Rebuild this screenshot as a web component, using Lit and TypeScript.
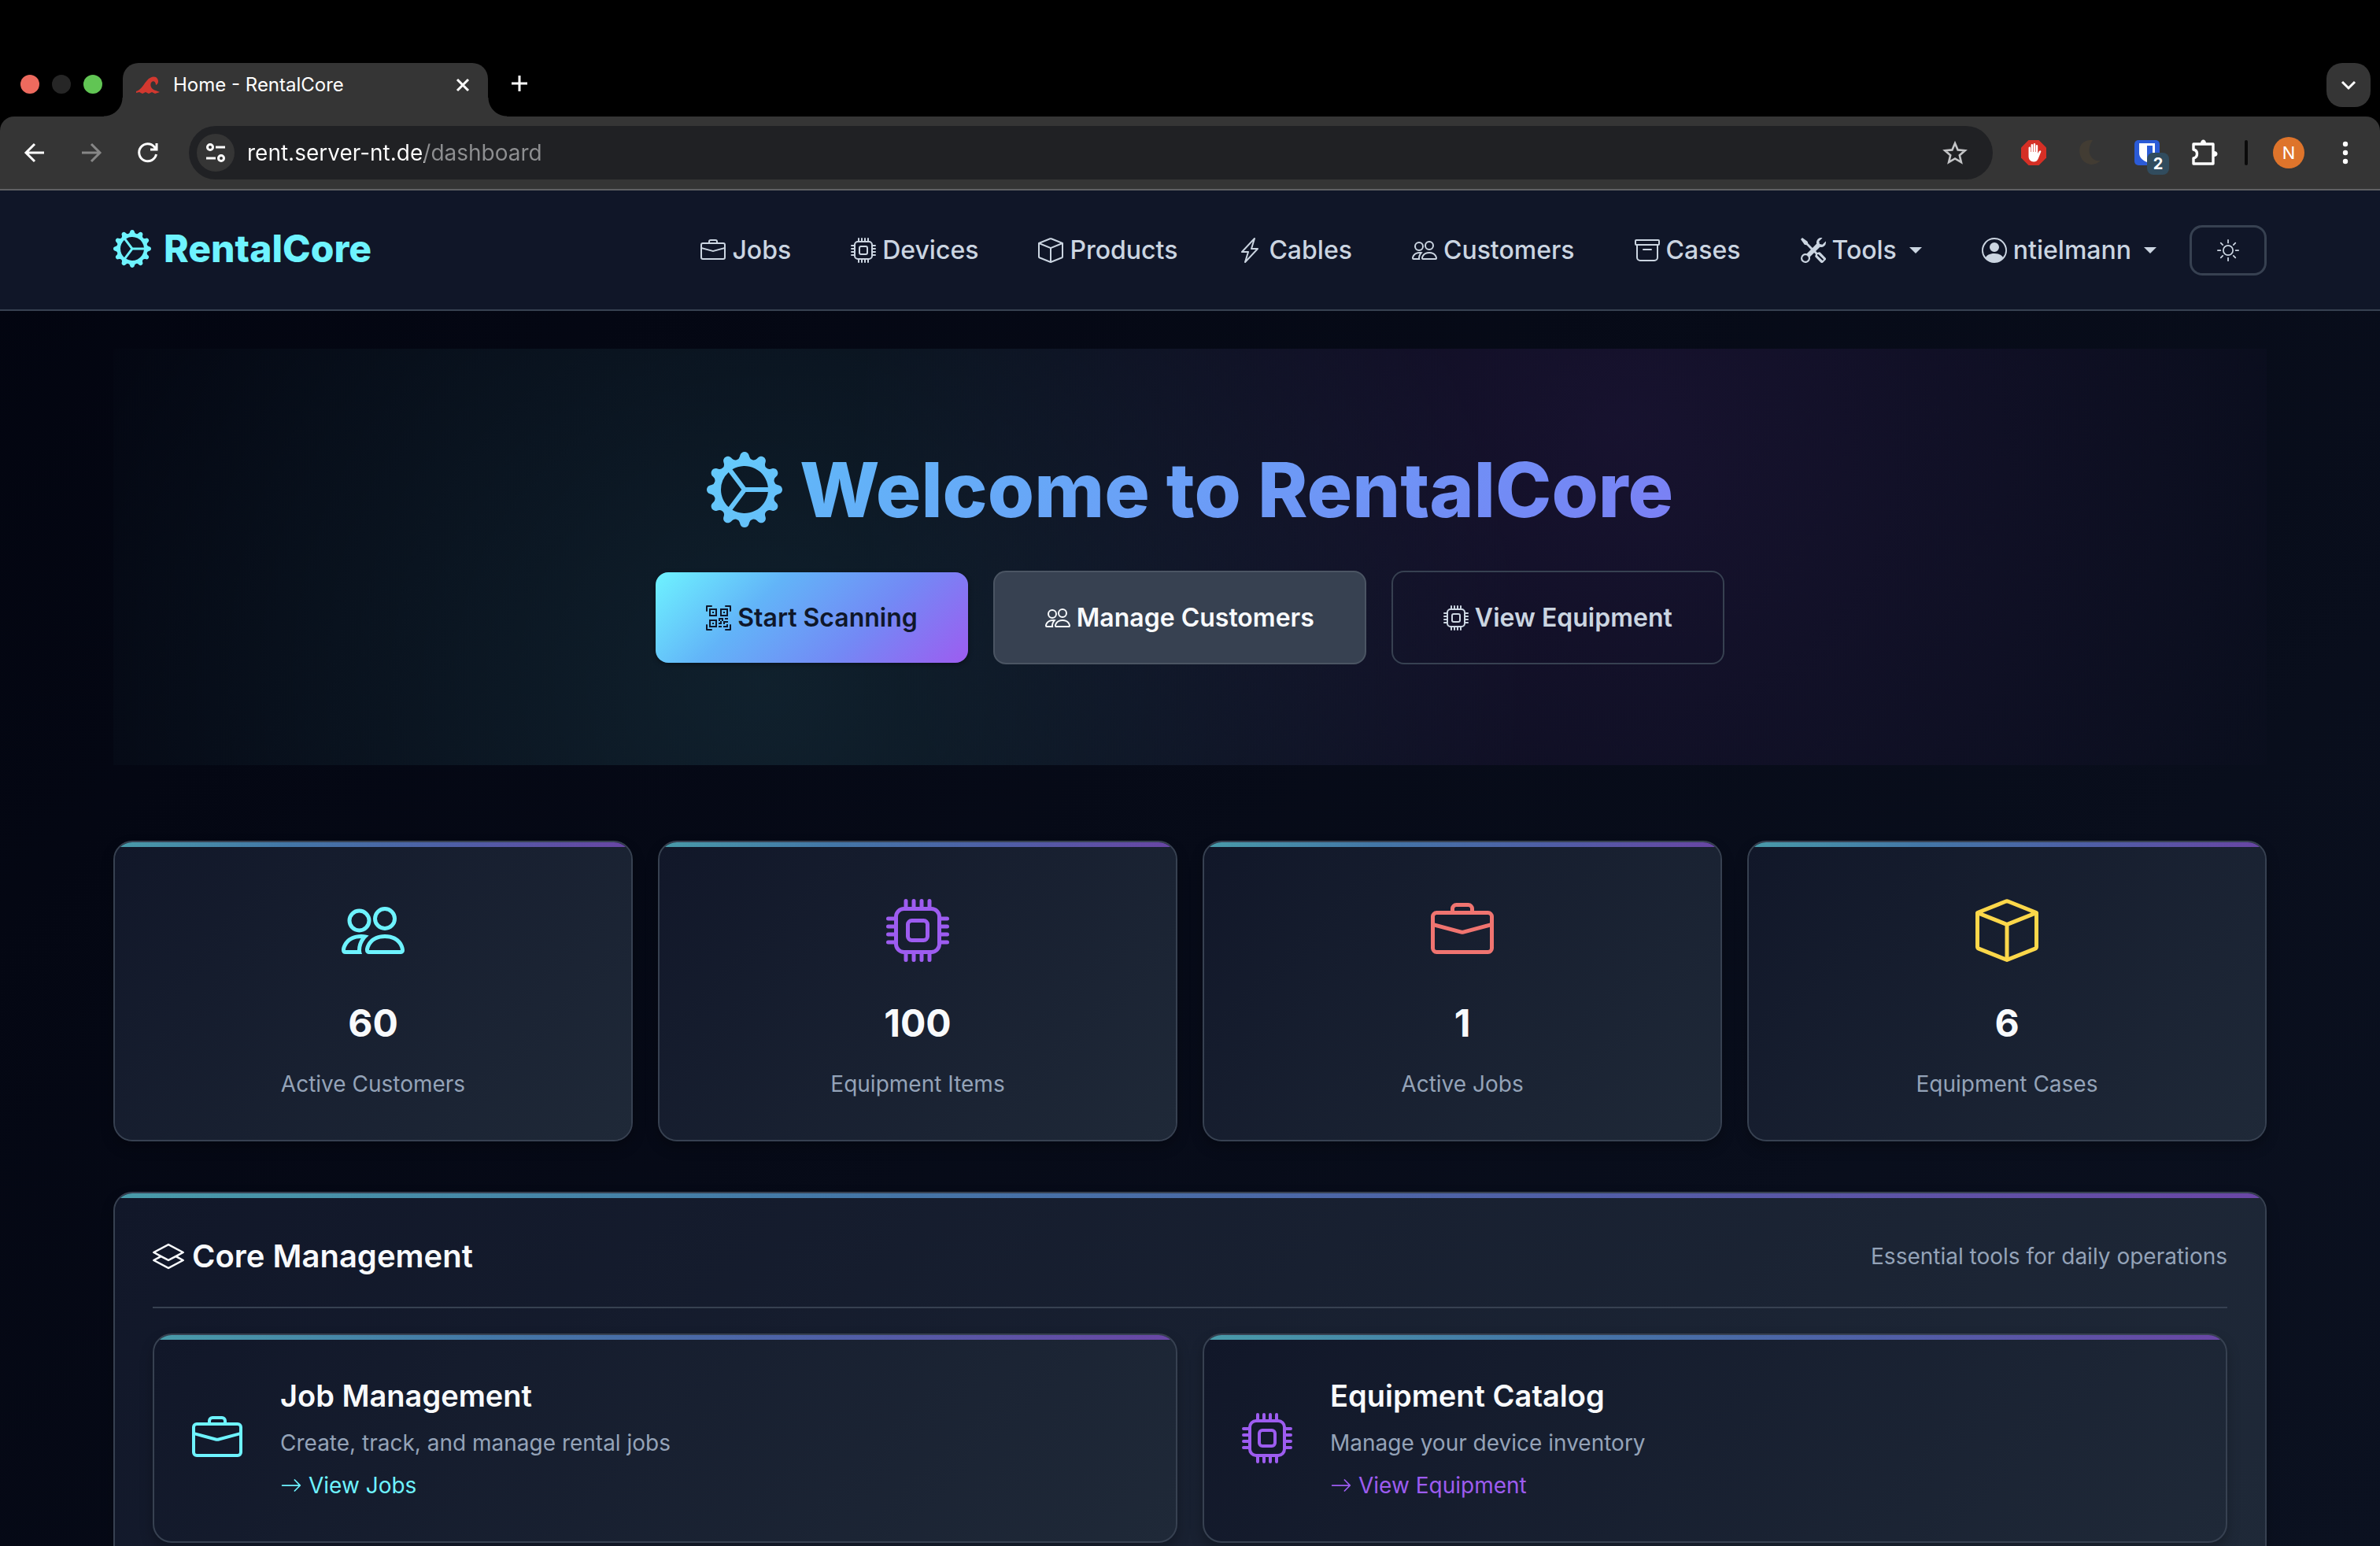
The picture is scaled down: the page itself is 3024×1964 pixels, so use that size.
import { LitElement, html, css, svg, nothing } from "lit";
import { customElement, property } from "lit/decorators.js";

const ICONS: Record<string, string> = {
  gear: "M7.068.727c.243-.97 1.62-.97 1.864 0l.071.286a.96.96 0 0 0 1.622.434l.205-.211c.695-.719 1.888-.03 1.613.931l-.08.284a.96.96 0 0 0 1.187 1.187l.283-.081c.96-.275 1.65.918.931 1.613l-.211.205a.96.96 0 0 0 .434 1.622l.286.071c.97.243.97 1.62 0 1.864l-.286.071a.96.96 0 0 0-.434 1.622l.211.205c.719.695.03 1.888-.931 1.613l-.284-.08a.96.96 0 0 0-1.187 1.187l.081.283c.275.96-.918 1.65-1.613.931l-.205-.211a.96.96 0 0 0-1.622.434l-.071.286c-.243.97-1.62.97-1.864 0l-.071-.286a.96.96 0 0 0-1.622-.434l-.205.211c-.695.719-1.888.03-1.613-.931l.08-.284a.96.96 0 0 0-1.186-1.187l-.284.081c-.96.275-1.65-.918-.931-1.613l.211-.205a.96.96 0 0 0-.434-1.622l-.286-.071c-.97-.243-.97-1.62 0-1.864l.286-.071a.96.96 0 0 0 .434-1.622l-.211-.205c-.719-.695-.03-1.888.931-1.613l.284.08a.96.96 0 0 0 1.187-1.186l-.081-.284c-.275-.96.918-1.65 1.613-.931l.205.211a.96.96 0 0 0 1.622-.434zM12.973 8.5H8.25l-2.834 3.779A4.998 4.998 0 0 0 12.973 8.5m0-1a4.998 4.998 0 0 0-7.557-3.779l2.834 3.78zM5.048 3.967l-.087.065zm-.431.355A4.98 4.98 0 0 0 3.002 8c0 1.455.622 2.765 1.615 3.678L7.375 8zm.344 7.646.087.065z",
  briefcase: "M6.5 1A1.5 1.5 0 0 0 5 2.5V3H1.5A1.5 1.5 0 0 0 0 4.5v8A1.5 1.5 0 0 0 1.5 14h13a1.5 1.5 0 0 0 1.5-1.5v-8A1.5 1.5 0 0 0 14.5 3H11v-.5A1.5 1.5 0 0 0 9.5 1zm0 1h3a.5.5 0 0 1 .5.5V3H6v-.5a.5.5 0 0 1 .5-.5m1.886 6.914L15 7.151V12.5a.5.5 0 0 1-.5.5h-13a.5.5 0 0 1-.5-.5V7.15l6.614 1.764a1.5 1.5 0 0 0 .772 0M1.5 4h13a.5.5 0 0 1 .5.5v1.616L8.129 7.948a.5.5 0 0 1-.258 0L1 6.116V4.5a.5.5 0 0 1 .5-.5",
  cpu: "M5 0a.5.5 0 0 1 .5.5V2h1V.5a.5.5 0 0 1 1 0V2h1V.5a.5.5 0 0 1 1 0V2h1V.5a.5.5 0 0 1 1 0V2A2.5 2.5 0 0 1 14 4.5h1.5a.5.5 0 0 1 0 1H14v1h1.5a.5.5 0 0 1 0 1H14v1h1.5a.5.5 0 0 1 0 1H14v1h1.5a.5.5 0 0 1 0 1H14a2.5 2.5 0 0 1-2.5 2.5v1.5a.5.5 0 0 1-1 0V14h-1v1.5a.5.5 0 0 1-1 0V14h-1v1.5a.5.5 0 0 1-1 0V14h-1v1.5a.5.5 0 0 1-1 0V14A2.5 2.5 0 0 1 2 11.5H.5a.5.5 0 0 1 0-1H2v-1H.5a.5.5 0 0 1 0-1H2v-1H.5a.5.5 0 0 1 0-1H2v-1H.5a.5.5 0 0 1 0-1H2A2.5 2.5 0 0 1 4.5 2V.5A.5.5 0 0 1 5 0m-.5 3A1.5 1.5 0 0 0 3 4.5v7A1.5 1.5 0 0 0 4.5 13h7a1.5 1.5 0 0 0 1.5-1.5v-7A1.5 1.5 0 0 0 11.5 3zM5 6.5A1.5 1.5 0 0 1 6.5 5h3A1.5 1.5 0 0 1 11 6.5v3A1.5 1.5 0 0 1 9.5 11h-3A1.5 1.5 0 0 1 5 9.5zM6.5 6a.5.5 0 0 0-.5.5v3a.5.5 0 0 0 .5.5h3a.5.5 0 0 0 .5-.5v-3a.5.5 0 0 0-.5-.5z",
  box: "M8.186 1.113a.5.5 0 0 0-.372 0L1.846 3.5 8 5.961 14.154 3.5zM15 4.239l-6.5 2.6v7.922l6.5-2.6V4.24zM7.5 14.762V6.838L1 4.239v7.923zM7.443.184a1.5 1.5 0 0 1 1.114 0l7.129 2.852A.5.5 0 0 1 16 3.5v8.662a1 1 0 0 1-.629.928l-7.185 2.874a.5.5 0 0 1-.372 0L.63 13.09a1 1 0 0 1-.63-.928V3.5a.5.5 0 0 1 .314-.464z",
  lightning: "M11.251.068a.5.5 0 0 1 .227.58L9.677 6.5H13a.5.5 0 0 1 .364.843l-8 8.5a.5.5 0 0 1-.842-.49L6.323 9.5H3a.5.5 0 0 1-.364-.843l8-8.5a.5.5 0 0 1 .615-.09zM4.157 8.5H7a.5.5 0 0 1 .478.647L6.11 13.59l5.732-6.09H9a.5.5 0 0 1-.478-.647L9.89 2.41z",
  people: "M15 14s1 0 1-1-1-4-5-4-5 3-5 4 1 1 1 1zm-7.978-1L7 12.996c.001-.264.167-1.03.76-1.72C8.312 10.629 9.282 10 11 10c1.717 0 2.687.63 3.24 1.276.593.69.758 1.457.76 1.72l-.008.002-.014.002zM11 7a2 2 0 1 0 0-4 2 2 0 0 0 0 4m3-2a3 3 0 1 1-6 0 3 3 0 0 1 6 0M6.936 9.28a6 6 0 0 0-1.23-.247A7 7 0 0 0 5 9c-4 0-5 3-5 4q0 1 1 1h4.216A2.24 2.24 0 0 1 5 13c0-1.01.377-2.042 1.09-2.904.243-.294.526-.569.846-.816M4.92 10A5.5 5.5 0 0 0 4 13H1c0-.26.164-1.03.76-1.724.545-.636 1.492-1.256 3.16-1.275zM1.5 5.5a3 3 0 1 1 6 0 3 3 0 0 1-6 0m3-2a2 2 0 1 0 0 4 2 2 0 0 0 0-4",
  archive: "M0 2a1 1 0 0 1 1-1h14a1 1 0 0 1 1 1v2a1 1 0 0 1-1 1v7.5a2.5 2.5 0 0 1-2.5 2.5h-9A2.5 2.5 0 0 1 1 12.5V5a1 1 0 0 1-1-1zm2 3v7.5A1.5 1.5 0 0 0 3.5 14h9a1.5 1.5 0 0 0 1.5-1.5V5zm13-3H1v2h14zM5 7.5a.5.5 0 0 1 .5-.5h5a.5.5 0 0 1 0 1h-5a.5.5 0 0 1-.5-.5",
  tools: "M1 0 0 1l2.2 3.081a1 1 0 0 0 .815.419h.07a1 1 0 0 1 .708.293l2.675 2.675-2.617 2.654A3.003 3.003 0 0 0 0 13a3 3 0 1 0 5.878-.851l2.654-2.617.968.968-.305.914a1 1 0 0 0 .242 1.023l3.27 3.27a.997.997 0 0 0 1.414 0l1.586-1.586a.997.997 0 0 0 0-1.414l-3.27-3.27a1 1 0 0 0-1.023-.242L10.5 9.5l-.96-.96 2.68-2.643A3.005 3.005 0 0 0 16 3q0-.405-.102-.777l-2.14 2.141L12 4l-.364-1.757L13.777.102a3 3 0 0 0-3.675 3.68L7.462 6.46 4.793 3.793a1 1 0 0 1-.293-.707v-.071a1 1 0 0 0-.419-.814zm9.646 10.646a.5.5 0 0 1 .708 0l2.914 2.915a.5.5 0 0 1-.707.707l-2.915-2.914a.5.5 0 0 1 0-.708M3 11l.471.242.529.026.287.445.445.287.026.529L5 13l-.242.471-.026.529-.445.287-.287.445-.529.026L3 15l-.471-.242L2 14.732l-.287-.445L1.268 14l-.026-.529L1 13l.242-.471.026-.529.445-.287.287-.445.529-.026z",
  person: "M11 6a3 3 0 1 1-6 0 3 3 0 0 1 6 0M0 8a8 8 0 1 1 16 0A8 8 0 0 1 0 8m8-7a7 7 0 0 0-5.468 11.37C3.242 11.226 4.805 10 8 10s4.757 1.225 5.468 2.37A7 7 0 0 0 8 1",
  sun: "M8 11a3 3 0 1 1 0-6 3 3 0 0 1 0 6m0 1a4 4 0 1 0 0-8 4 4 0 0 0 0 8M8 0a.5.5 0 0 1 .5.5v2a.5.5 0 0 1-1 0v-2A.5.5 0 0 1 8 0m0 13a.5.5 0 0 1 .5.5v2a.5.5 0 0 1-1 0v-2A.5.5 0 0 1 8 13m8-5a.5.5 0 0 1-.5.5h-2a.5.5 0 0 1 0-1h2a.5.5 0 0 1 .5.5M3 8a.5.5 0 0 1-.5.5h-2a.5.5 0 0 1 0-1h2A.5.5 0 0 1 3 8m10.657-5.657a.5.5 0 0 1 0 .707l-1.414 1.415a.5.5 0 1 1-.707-.708l1.414-1.414a.5.5 0 0 1 .707 0m-9.193 9.193a.5.5 0 0 1 0 .707L3.05 13.657a.5.5 0 0 1-.707-.707l1.414-1.414a.5.5 0 0 1 .707 0m9.193 2.121a.5.5 0 0 1-.707 0l-1.414-1.414a.5.5 0 0 1 .707-.707l1.414 1.414a.5.5 0 0 1 0 .707M4.464 4.465a.5.5 0 0 1-.707 0L2.343 3.05a.5.5 0 1 1 .707-.707l1.414 1.414a.5.5 0 0 1 0 .708",
  layers: "M8.235 1.559a.5.5 0 0 0-.47 0l-7.5 4a.5.5 0 0 0 0 .882L3.188 8 .264 9.559a.5.5 0 0 0 0 .882l7.5 4a.5.5 0 0 0 .47 0l7.5-4a.5.5 0 0 0 0-.882L12.813 8l2.922-1.559a.5.5 0 0 0 0-.882zm3.515 7.008L14.438 10 8 13.433 1.562 10 4.25 8.567l3.515 1.874a.5.5 0 0 0 .47 0zM8 9.433 1.562 6 8 2.567 14.438 6z",
  arrow: "M1 8a.5.5 0 0 1 .5-.5h11.793l-3.147-3.146a.5.5 0 0 1 .708-.708l4 4a.5.5 0 0 1 0 .708l-4 4a.5.5 0 0 1-.708-.708L13.293 8.5H1.5A.5.5 0 0 1 1 8",
  scan: "M0 .5A.5.5 0 0 1 .5 0h3a.5.5 0 0 1 0 1H1v2.5a.5.5 0 0 1-1 0zm12 0a.5.5 0 0 1 .5-.5h3a.5.5 0 0 1 .5.5v3a.5.5 0 0 1-1 0V1h-2.5a.5.5 0 0 1-.5-.5M.5 12a.5.5 0 0 1 .5.5V15h2.5a.5.5 0 0 1 0 1h-3a.5.5 0 0 1-.5-.5v-3a.5.5 0 0 1 .5-.5m15 0a.5.5 0 0 1 .5.5v3a.5.5 0 0 1-.5.5h-3a.5.5 0 0 1 0-1H15v-2.5a.5.5 0 0 1 .5-.5M4 4h1v1H4zM7 2H2v5h5zM3 3h3v3H3zm2 8H4v1h1zM7 9H2v5h5zm-4 1h3v3H3zm8-6h1v1h-1zM9 2h5v5H9zm1 1v3h3V3zM8 8v2h1v1H8v1h2v-2h1v2h1v-1h2v-1h-3V8zm2 2H9V9h1zm4 2h-1v1h-2v1h3zm-4 2v-1H8v1zM12 9h2V8h-2z",
};

/** Square glyph on a 16-unit grid, as large as its font size. */
@customElement("rc-icon")
class RcIcon extends LitElement {
  @property() name = "";
  @property({ type: Boolean }) shaded = false;

  static styles = css`
    :host { display: inline-flex; width: 1em; height: 1em; flex: none; }
    svg { width: 100%; height: 100%; display: block; }
  `;

  render() {
    return html`<svg viewBox="0 0 16 16" fill=${this.shaded ? "url(#shade)" : "currentColor"} fill-rule="evenodd" aria-hidden="true">
      ${this.shaded
        ? svg`<defs><linearGradient id="shade" x1="0" y1="0" x2="1" y2="1">
            <stop offset="0" stop-color="#66ccfa"/><stop offset="1" stop-color="#64bdf9"/>
          </linearGradient></defs>`
        : nothing}
      <path d=${ICONS[this.name] ?? ""} />
    </svg>`;
  }
}

@customElement("browser-chrome")
class BrowserChrome extends LitElement {
  static styles = css`
    :host { display: block; background: #000; font-family: Inter, "Liberation Sans", sans-serif; color: #fff; }
    button { border: 0; background: none; padding: 0; margin: 0; color: inherit; font: inherit; display: grid; place-items: center; flex: none; }
    svg { display: block; }
    .tabs { display: flex; padding: 80px 12px 0 26px; height: 68px; align-items: flex-start; }
    .lights { display: flex; gap: 16px; padding-top: 15px; width: 130px; flex: none; }
    .light { width: 24px; height: 24px; border-radius: 50%; }
    .red { background: #ed6a5e; }
    .grey { background: #262626; }
    .green { background: #61c554; }
    .tab { position: relative; box-sizing: border-box; width: 464px; height: 68px; background: #353535; border-radius: 20px 20px 0 0; display: flex; align-items: center; padding: 0 20px 12px 16px; gap: 16px; font-size: 24px; line-height: 32px; }
    .tab::before, .tab::after { content: ""; position: absolute; bottom: 0; width: 24px; height: 24px; }
    .tab::before { left: -24px; background: radial-gradient(circle at 0 0, transparent 23px, #353535 24px); }
    .tab::after { right: -24px; background: radial-gradient(circle at 100% 0, transparent 23px, #353535 24px); }
    .tab-title { flex: 1; }
    .new-tab { width: 40px; height: 40px; margin: 6px 0 0 20px; }
    .tab-list { width: 56px; height: 56px; border-radius: 20px; background: #353535; margin-left: auto; }
    .toolbar { display: flex; align-items: center; height: 92px; background: #353535; border-bottom: 2px solid #5f6062; border-radius: 18px 18px 0 0; padding: 0 28px 0 20px; }
    .nav { display: flex; gap: 24px; margin-right: 28px; }
    .nav button { width: 48px; height: 48px; }
    .dim { color: #878787; }
    .address { flex: 1; display: flex; align-items: center; gap: 16px; box-sizing: border-box; height: 68px; border-radius: 34px; background: #202124; padding: 0 32px 0 10px; }
    .site { width: 48px; height: 48px; border-radius: 50%; background: #353535; }
    .url { flex: 1; min-width: 0; border: 0; padding: 0; outline: 0; font: 28px/40px Inter, "Liberation Sans", sans-serif; color: transparent; background: linear-gradient(90deg, #fff 0 225px, #8e8f91 225px); -webkit-background-clip: text; background-clip: text; }
    .tools { display: flex; align-items: center; gap: 40px; margin-left: 36px; }
    .vault { position: relative; }
    .badge { position: absolute; left: 16px; top: 16px; width: 28px; height: 28px; border-radius: 8px; background: #314c5e; font-size: 20px; line-height: 28px; font-weight: 700; text-align: center; }
    .rule { width: 4px; height: 32px; border-radius: 2px; background: #0a0a0a; margin: 0 -8px 0 -6px; }
    .avatar { width: 40px; height: 40px; border-radius: 50%; background: #de742b; font-size: 22px; line-height: 40px; }
    .menu { width: 32px; height: 40px; margin-left: -4px; }
  `;

  render() {
    return html`
      <div class="tabs">
        <div class="lights"><span class="light red"></span><span class="light grey"></span><span class="light green"></span></div>
        <div class="tab">
          <svg width="32" height="24" viewBox="0 0 32 24" fill="#d2382f" aria-hidden="true">
            <path d="M1 20C8 18 11 10 15 6c4-5 11-6 13-2 2 3 1 7-2 8 0-5-4-6-6-3-2 4 1 9 6 10l5 2-3 1-3 1-4-2-4 2-4-2-4 2-4-2-4 1z" />
          </svg>
          <span class="tab-title">Home - RentalCore</span>
          <button aria-label="Close tab"><svg width="24" height="24" viewBox="0 0 24 24" stroke="currentColor" stroke-width="3"><path d="M5 5l14 14M19 5 5 19" /></svg></button>
        </div>
        <button class="new-tab" aria-label="New tab"><svg width="24" height="24" viewBox="0 0 24 24" stroke="currentColor" stroke-width="3"><path d="M12 2v20M2 12h20" /></svg></button>
        <button class="tab-list" aria-label="Search tabs"><svg width="24" height="24" viewBox="0 0 24 24" fill="none" stroke="currentColor" stroke-width="3"><path d="m4 8 8 8 8-8" /></svg></button>
      </div>
      <div class="toolbar">
        <div class="nav">
          <button aria-label="Back"><svg width="28" height="28" viewBox="0 0 28 28" fill="none" stroke="currentColor" stroke-width="3"><path d="M26 14H4M14 3 3 14l11 11" /></svg></button>
          <button class="dim" aria-label="Forward"><svg width="28" height="28" viewBox="0 0 28 28" fill="none" stroke="currentColor" stroke-width="3"><path d="M2 14h22M14 3l11 11-11 11" /></svg></button>
          <button aria-label="Reload"><svg width="28" height="28" viewBox="0 0 28 28" fill="none" stroke="currentColor" stroke-width="3"><path d="M24.500 16A11 11 0 1 1 22 6.500L25 10M25 2v8h-8" /></svg></button>
        </div>
        <div class="address">
          <button class="site" aria-label="Site information"><svg width="28" height="28" viewBox="0 0 28 28" fill="none" stroke="currentColor" stroke-width="3"><circle cx="7" cy="7" r="3.500" /><path d="M14 7h12M2 21h12" /><circle cx="21" cy="21" r="3.500" /></svg></button>
          <input class="url" type="text" aria-label="Address" value="rent.server-nt.de/dashboard" />
          <button aria-label="Bookmark"><svg width="32" height="32" viewBox="0 0 32 32" fill="none" stroke="#c4c5c7" stroke-width="2.600"><path d="m16 4 3.600 8.400 9.100.8-6.900 6 2.100 8.900L16 23.400l-7.900 4.700 2.100-8.900-6.900-6 9.100-.8z" /></svg></button>
        </div>
        <div class="tools">
          <button aria-label="Ad blocker"><svg width="32" height="32" viewBox="0 0 32 32"><path fill="#d52f25" d="M9.500 0h13L32 9.500v13L22.500 32h-13L0 22.500v-13z" /><path fill="#fff" d="M9.500 10c0-2 2.500-2 2.500 0v5h.6V6.500c0-2 2.500-2 2.500 0V15h.6V5.500c0-2 2.500-2 2.500 0V15h.6V7.500c0-2 2.400-2 2.400 0V17l1.700-3c1-1.500 3-.8 2.300 1l-3.200 8c-1.200 3-3 4.500-6 4.500-4 0-6.500-3-6.500-7z" /></svg></button>
          <button aria-label="Dark mode"><svg width="32" height="32" viewBox="0 0 32 32"><path fill="#423c33" d="M19 0C5-1 0 9 3 19c3 12 17 16 26 7-12 2-20-12-10-26z" /></svg></button>
          <button class="vault" aria-label="Passwords"><svg width="32" height="32" viewBox="0 0 32 32"><rect width="32" height="32" rx="5" fill="#2b5bd7" /><path fill="#fff" d="M6 4h20v13c0 5-5 9-10 11C11 26 6 22 6 17z" /><path fill="#2b5bd7" d="M16 7h7v10c0 3-3 6-7 8z" /></svg><span class="badge">2</span></button>
          <button aria-label="Extensions"><svg width="34" height="34" viewBox="0 0 34 34"><path fill="none" stroke="currentColor" stroke-width="3.400" stroke-linejoin="round" d="M3 6h25v25H3v-7c6-1 6-10 0-11z" /><path fill="currentColor" d="M12 5c0-6 7-6 7 0zM29 15c6 0 6 7 0 7z" /></svg></button>
          <span class="rule"></span>
          <button class="avatar" aria-label="Profile">N</button>
          <button class="menu" aria-label="Menu"><svg width="8" height="32" viewBox="0 0 8 32" fill="currentColor"><circle cx="4" cy="5" r="3.200" /><circle cx="4" cy="16" r="3.200" /><circle cx="4" cy="27" r="3.200" /></svg></button>
        </div>
      </div>
    `;
  }
}

interface NavItem { icon: string; label: string; menu?: boolean }

const NAV: NavItem[] = [
  { icon: "briefcase", label: "Jobs" },
  { icon: "cpu", label: "Devices" },
  { icon: "box", label: "Products" },
  { icon: "lightning", label: "Cables" },
  { icon: "people", label: "Customers" },
  { icon: "archive", label: "Cases" },
  { icon: "tools", label: "Tools", menu: true },
  { icon: "person", label: "ntielmann", menu: true },
];

const STATS = [
  { icon: "people", tone: "cyan", value: 60, label: "Active Customers" },
  { icon: "cpu", tone: "purple", value: 100, label: "Equipment Items" },
  { icon: "briefcase", tone: "red", value: 1, label: "Active Jobs" },
  { icon: "box", tone: "yellow", value: 6, label: "Equipment Cases" },
];

const FEATURES = [
  { icon: "briefcase", tone: "cyan", title: "Job Management", text: "Create, track, and manage rental jobs", link: "View Jobs" },
  { icon: "cpu", tone: "purple", title: "Equipment Catalog", text: "Manage your device inventory", link: "View Equipment" },
];

@customElement("app-root")
class AppRoot extends LitElement {
  static styles = css`
    :host {
      display: block; height: 100vh; overflow: hidden;
      font-family: Inter, "Liberation Sans", sans-serif; font-size: 28px; line-height: 46px; color: #94a3b8;
      background: linear-gradient(135deg, #02040f 0%, #0b1120 100%);
      --accent: linear-gradient(135deg, #6ef3ff 0%, #62b4f8 33%, #7389f5 66%, #9d5cf0 100%);
      --line: #374151;
    }
    a { color: inherit; text-decoration: none; }
    button { font: inherit; color: inherit; background: none; border: 0; padding: 0; margin: 0; }
    h1, h2, h3, p { margin: 0; }
    .cyan { color: #6ef3ff; }
    .purple { color: #9d5cf0; }
    .red { color: #f07470; }
    .yellow { color: #fcd74a; }

    .navbar { display: flex; align-items: center; height: 151px; padding: 0 144px; border-bottom: 2px solid var(--line); background: #101628; }
    .brand { display: flex; align-items: center; gap: 16px; padding-bottom: 3px; font-size: 48px; line-height: 56px; font-weight: 800; color: #6ef3ff; margin-right: auto; }
    .links { display: flex; align-items: center; gap: 76px; font-size: 32px; line-height: 52px; font-weight: 500; color: #cbd5e1; }
    .link { display: flex; align-items: center; gap: 8px; }
    .caret { border: 8px solid transparent; border-top-color: currentColor; border-bottom: 0; margin-left: 8px; }
    .theme { display: grid; place-items: center; box-sizing: border-box; width: 98px; height: 64px; border: 3px solid var(--line); border-radius: 16px; color: #cbd5e1; margin-left: 42px; font-size: 28px; }

    main { padding: 48px 144px; }
    .hero {
      padding: 126px 0 128px; display: flex; flex-direction: column; gap: 50px; text-align: center;
      background: radial-gradient(circle at 30% 80%, rgba(110, 243, 255, 0.1) 0%, transparent 50%),
        radial-gradient(circle at 70% 20%, rgba(168, 85, 247, 0.1) 0%, transparent 50%);
    }
    .title { display: flex; justify-content: center; align-items: center; gap: 22px; font-size: 96px; line-height: 106px; font-weight: 800; color: transparent; background: var(--accent); -webkit-background-clip: text; background-clip: text; }
    .actions { display: flex; justify-content: center; align-items: center; gap: 32px; font-size: 32px; line-height: 51px; font-weight: 600; }
    .btn { display: flex; align-items: center; gap: 8px; padding: 32px 64px; border-radius: 16px; }
    .primary { background: var(--accent); color: #0f172a; box-shadow: 0 2px 6px rgba(0, 0, 0, 0.4); }
    .secondary { background: #374151; border: 2px solid #4b5563; color: #f8fafc; }
    .outline { border: 2px solid var(--line); color: #cbd5e1; }

    .card { position: relative; overflow: hidden; border: 2px solid var(--line); border-radius: 24px; background: linear-gradient(135deg, #111729 0%, #1f2938 100%) padding-box; box-shadow: 0 8px 16px rgba(0, 0, 0, 0.25); }
    .card::before { content: ""; position: absolute; left: 0; right: 0; top: 0; height: 6px; background: linear-gradient(90deg, #6ef3ff 0%, #62b4f8 33%, #7389f5 66%, #9d5cf0 100%); opacity: 0.6; }
    .stats { display: grid; grid-template-columns: repeat(4, 1fr); gap: 32px; margin: 96px 0 64px; }
    .stat { display: flex; flex-direction: column; align-items: center; padding: 72px 48px 48px; }
    .stat-icon { font-size: 80px; margin-bottom: 40px; }
    .stat-value { font-size: 48px; line-height: 76px; font-weight: 700; color: #f8fafc; margin-bottom: 16px; }
    .section { padding: 48px; }
    .section-head { display: flex; justify-content: space-between; align-items: center; padding-bottom: 32px; margin-bottom: 32px; border-bottom: 2px solid var(--line); }
    .section-title { display: flex; align-items: center; gap: 10px; font-size: 40px; line-height: 64px; font-weight: 600; color: #f8fafc; }
    .features { display: grid; grid-template-columns: repeat(2, 1fr); gap: 32px; }
    .feature { display: flex; align-items: center; gap: 48px; padding: 48px; }
    .feature-icon { font-size: 64px; }
    .feature-body { display: flex; flex-direction: column; align-items: flex-start; gap: 8px; }
    .feature-title { font-size: 38px; line-height: 58px; font-weight: 600; color: #f8fafc; }
    .feature-link { display: flex; align-items: center; gap: 8px; }
  `;

  private navItem(item: NavItem) {
    const body = html`<rc-icon name=${item.icon}></rc-icon><span>${item.label}</span>`;
    return item.menu
      ? html`<button class="link" aria-haspopup="true">${body}<span class="caret"></span></button>`
      : html`<a class="link" href="#">${body}</a>`;
  }

  render() {
    return html`
      <browser-chrome></browser-chrome>
      <header class="navbar">
        <a class="brand" href="#"><rc-icon name="gear"></rc-icon><span>RentalCore</span></a>
        <nav class="links">${NAV.map((item) => this.navItem(item))}</nav>
        <button class="theme" aria-label="Toggle theme"><rc-icon name="sun"></rc-icon></button>
      </header>
      <main>
        <section class="hero">
          <h1 class="title"><rc-icon name="gear" shaded></rc-icon><span>Welcome to RentalCore</span></h1>
          <div class="actions">
            <a class="btn primary" href="#"><rc-icon name="scan"></rc-icon><span>Start Scanning</span></a>
            <a class="btn secondary" href="#"><rc-icon name="people"></rc-icon><span>Manage Customers</span></a>
            <a class="btn outline" href="#"><rc-icon name="cpu"></rc-icon><span>View Equipment</span></a>
          </div>
        </section>
        <section class="stats">
          ${STATS.map((s) => html`
            <div class="card stat">
              <rc-icon class="stat-icon ${s.tone}" name=${s.icon}></rc-icon>
              <span class="stat-value">${s.value}</span>
              <span>${s.label}</span>
            </div>`)}
        </section>
        <section class="card section">
          <div class="section-head">
            <h2 class="section-title"><rc-icon name="layers"></rc-icon><span>Core Management</span></h2>
            <p>Essential tools for daily operations</p>
          </div>
          <div class="features">
            ${FEATURES.map((f) => html`
              <article class="card feature">
                <rc-icon class="feature-icon ${f.tone}" name=${f.icon}></rc-icon>
                <div class="feature-body">
                  <h3 class="feature-title">${f.title}</h3>
                  <p>${f.text}</p>
                  <a class="feature-link ${f.tone}" href="#"><rc-icon name="arrow"></rc-icon><span>${f.link}</span></a>
                </div>
              </article>`)}
          </div>
        </section>
      </main>
    `;
  }
}
